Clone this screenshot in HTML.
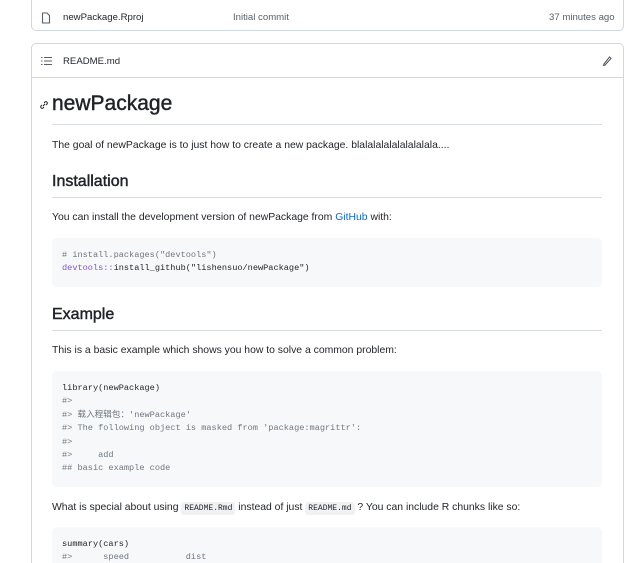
<!DOCTYPE html>
<html style="width:644px;height:563px;overflow:hidden"><head><meta charset="utf-8"><style>
*{margin:0;padding:0;box-sizing:border-box}
body{width:644px;height:563px;overflow:hidden;background:#fff;font-family:"Liberation Sans","Noto Sans CJK SC",sans-serif;color:#1f2328;position:relative}
.a{position:absolute}
.box{position:absolute;left:31px;width:593px;border:1px solid #d0d7de;border-radius:5px;background:#fff}
.t{font-size:9.6px;color:#1f2328;white-space:nowrap}
.p{font-size:10.4px;white-space:nowrap}
h{display:block;position:absolute;left:52px;width:550px;border-bottom:1px solid #d8dee4}
.code{position:absolute;left:52px;width:550px;background:#f6f8fa;border-radius:5px;font-family:"Liberation Mono","Noto Sans CJK SC",monospace;font-size:8.6px;line-height:13.4px;padding:0 10px;color:#1f2328;white-space:pre}
.c{color:#6e7781}
.k{color:#8250df}
.ic{font-family:"Liberation Mono",monospace;font-size:8px;background:#eff1f3;border-radius:3px;padding:2px 3px}
.hd{position:absolute;left:52px;white-space:nowrap;-webkit-text-stroke:0.45px #1f2328}
</style></head><body>
<div class="box" style="top:-6px;height:37px"></div>
<svg class="a" style="left:41px;top:12px" width="10" height="12" viewBox="0 0 10 12"><path d="M1.5 1h4.5l2.5 2.5V11h-7z" fill="none" stroke="#57606a" stroke-width="1.1"/></svg>
<div class="a t" style="left:63px;top:12px">newPackage.Rproj</div>
<div class="a t" style="left:233px;top:12px;color:#57606a">Initial commit</div>
<div class="a t" style="left:549px;top:12px;color:#57606a">37 minutes ago</div>

<div class="box" style="top:43px;height:540px"></div>
<div class="a" style="left:32px;top:77px;width:591px;border-top:1px solid #d0d7de"></div>
<svg class="a" style="left:41px;top:56px" width="11" height="10" viewBox="0 0 11 10"><g stroke="#57606a" stroke-width="1"><path d="M0 1.5h1.5M0 5h1.5M0 8.5h1.5M3 1.5h8M3 5h8M3 8.5h8"/></g></svg>
<div class="a t" style="left:63px;top:56px">README.md</div>
<svg class="a" style="left:602px;top:55px" width="10" height="11" viewBox="0 0 10 11"><path d="M2 9l-.5 1.5L3 10 9 3.5 7.5 2z" fill="none" stroke="#57606a" stroke-width="1.1"/></svg>

<svg class="a" style="left:39px;top:100px" width="10" height="10" viewBox="0 0 10 10"><path d="M4 6l2-2M3 5L1.8 6.2a1.5 1.5 0 002 2L5 7M5 3l1.2-1.2a1.5 1.5 0 012 2L7 5" fill="none" stroke="#1f2328" stroke-width="1"/></svg>
<div class="hd" style="top:92px;font-size:21px">newPackage</div>
<h style="top:124px"></h>
<div class="a p" style="left:52px;top:140px">The goal of newPackage is to just how to create a new package. blalalalalalalalalala....</div>
<div class="hd" style="top:173px;font-size:16px">Installation</div>
<h style="top:197px"></h>
<div class="a p" style="left:52px;top:212px">You can install the development version of newPackage from <span style="color:#0969da">GitHub</span> with:</div>
<div class="code" style="top:238px;height:49px;padding-top:11px"><span class="c"># install.packages("devtools")</span>
<span class="k">devtools::</span>install_github("lishensuo/newPackage")</div>
<div class="hd" style="top:306px;font-size:16px">Example</div>
<h style="top:330px"></h>
<div class="a p" style="left:52px;top:345px">This is a basic example which shows you how to solve a common problem:</div>
<div class="code" style="top:371px;height:116px;padding-top:11px">library(newPackage)
<span class="c">#&gt;
#&gt; 载入程辑包：'newPackage'
#&gt; The following object is masked from 'package:magrittr':
#&gt;
#&gt;     add
## basic example code</span></div>
<div class="a p" style="left:52px;top:502px">What is special about using <span class="ic">README.Rmd</span> instead of just <span class="ic">README.md</span> ? You can include R chunks like so:</div>
<div class="code" style="top:527px;height:60px;padding-top:11px">summary(cars)
<span class="c">#&gt;      speed           dist</span></div>
</body></html>
